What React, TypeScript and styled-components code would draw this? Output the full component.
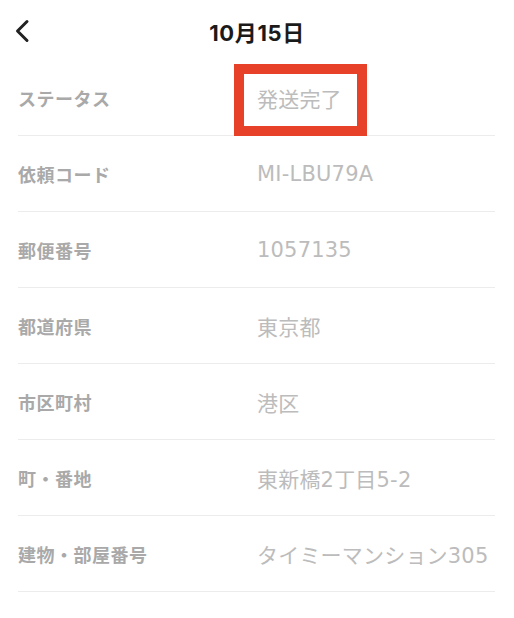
import styled, { createGlobalStyle } from "styled-components";

const rows = [
  { label: "ステータス", value: "発送完了", mark: true },
  { label: "依頼コード", value: "MI-LBU79A" },
  { label: "郵便番号", value: "1057135" },
  { label: "都道府県", value: "東京都" },
  { label: "市区町村", value: "港区" },
  { label: "町・番地", value: "東新橋2丁目5-2" },
  { label: "建物・部屋番号", value: "タイミーマンション305" },
];

function App() {
  return (
    <>
      <Global />
      <Page>
        <Header>
          <BackButton aria-label="戻る">
            <svg width="16" height="24" viewBox="0 0 16 24">
              <path d="M13 2.5 L3.5 12 L13 21.5" fill="none" stroke="#222" strokeWidth="3" strokeLinecap="round" strokeLinejoin="round" />
            </svg>
          </BackButton>
          <Title>10月15日</Title>
        </Header>
        <List>
          {rows.map(row =>
            <Row key={row.label}>
              <Label>{row.label}</Label>
              <Value>{row.value}</Value>
              {row.mark && <Mark />}
            </Row>)}
        </List>
      </Page>
    </>
  )
}

export default App

const Global = createGlobalStyle`
  body {
    margin: 0;
    background: #fff;
    font-family: Inter, 'Noto Sans CJK JP', sans-serif;
  }
`

const Page = styled.div`
  width: 514px;
  min-height: 618px;
  background: #fff;
`

const Header = styled.div`
  position: relative;
  height: 60px;
  display: flex;
  align-items: center;
  justify-content: center;
`

const Title = styled.div`
  font-size: 22px;
  font-weight: 700;
  color: #1a1a1a;
  margin: 2px 0 0 0;
  letter-spacing: 0.6px;
`

const BackButton = styled.button`
  position: absolute;
  left: 14px;
  top: 19px;
  padding: 0;
  border: none;
  background: none;
  display: flex;
`

const List = styled.div`
  padding: 0 19px 0 18px;
`

const Row = styled.div`
  position: relative;
  display: grid;
  grid-template-columns: 239px 1fr;
  align-items: center;
  height: 75px;
  border-bottom: 1px solid #ececec;
`

const Label = styled.div`
  font-size: 18px;
  font-weight: 700;
  color: #a9a9a9;
  letter-spacing: 0.5px;
  font-family: 'Noto Sans CJK JP', sans-serif;
`

const Value = styled.div`
  font-size: 21px;
  font-weight: 400;
  color: #bcbcbc;
  letter-spacing: 0.2px;
  font-family: 'DejaVu Sans', 'Noto Sans CJK JP', sans-serif;
`

const Mark = styled.span`
  position: absolute;
  left: 216px;
  top: 4px;
  box-sizing: border-box;
  width: 133px;
  height: 72px;
  border: 10px solid #e8412a;
`
